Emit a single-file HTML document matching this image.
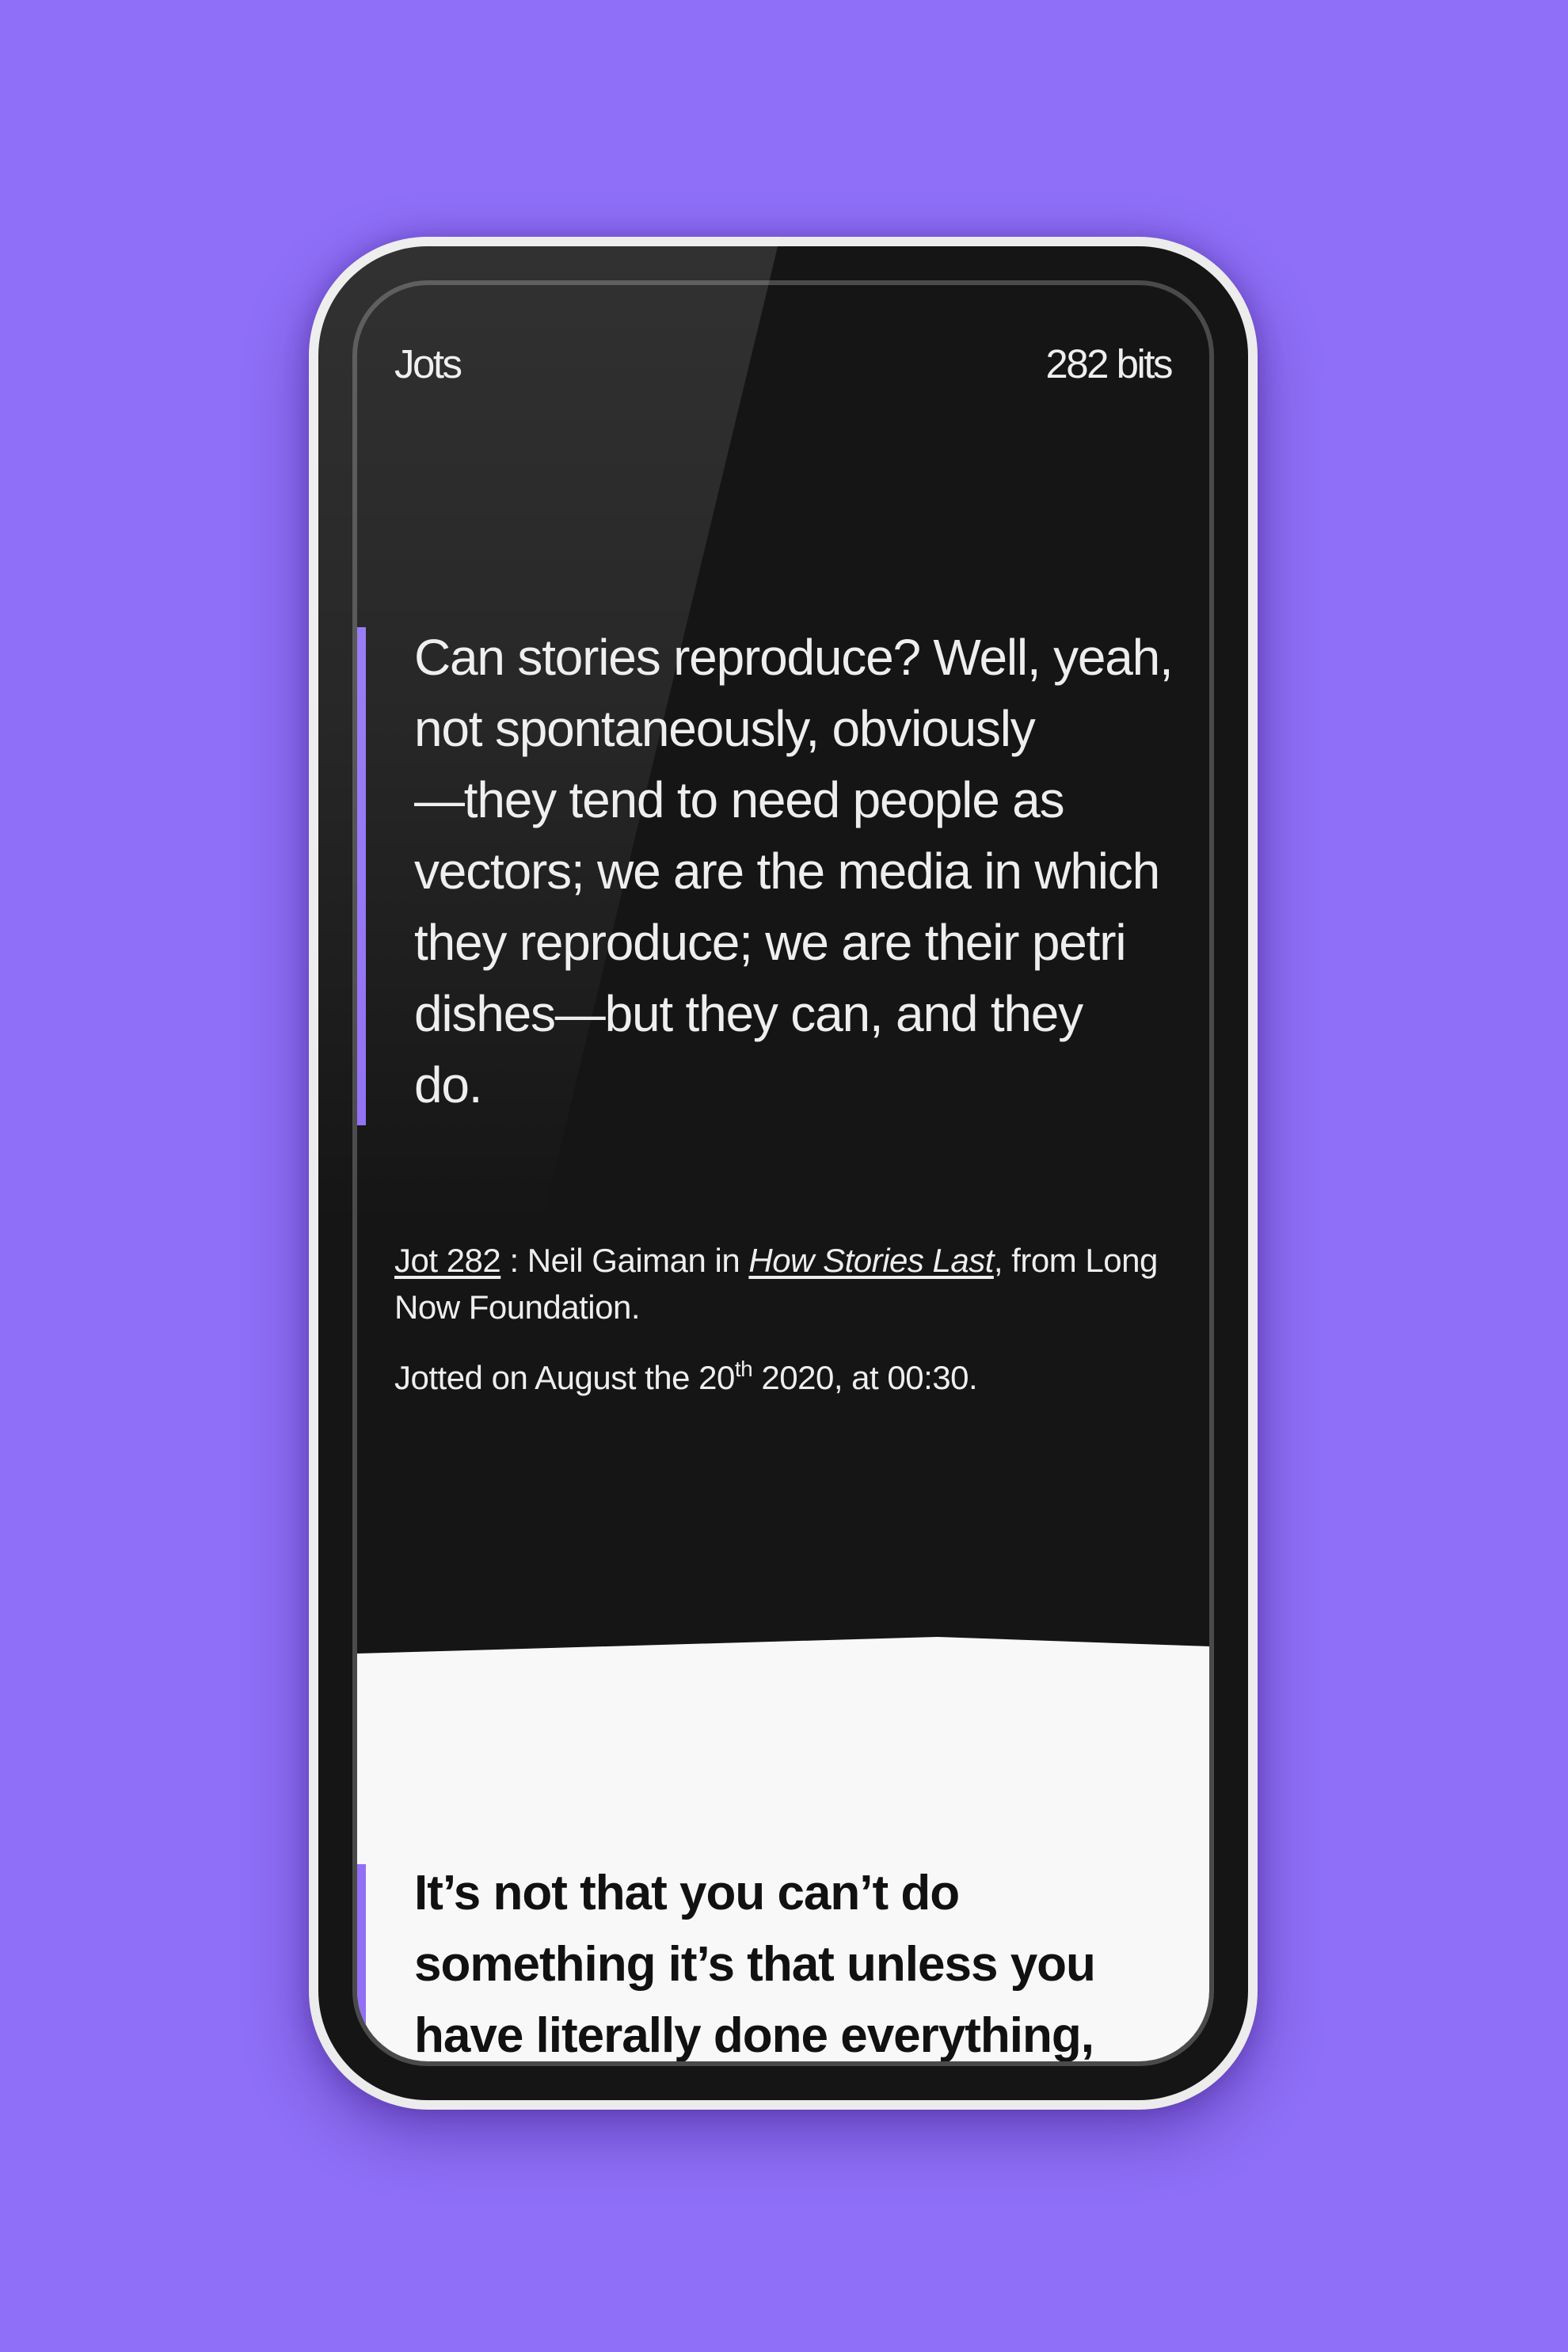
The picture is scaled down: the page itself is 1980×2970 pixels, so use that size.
<!DOCTYPE html>
<html><head><meta charset="utf-8"><style>
*{margin:0;padding:0;box-sizing:border-box}
html,body{width:1980px;height:2970px;overflow:hidden;background:#8f6ff7;font-family:"Liberation Sans",sans-serif}
.phone{position:absolute;left:390px;top:299px;width:1198px;height:2365px;border-radius:150px;background:#ececec;box-shadow:0 30px 80px rgba(50,20,120,.45),0 0 30px rgba(50,20,120,.3)}
.bezel{position:absolute;left:12px;top:12px;right:12px;bottom:12px;border-radius:138px;background:#151515;overflow:hidden}
.screen{position:absolute;left:445px;top:354px;width:1088px;height:2255px;border:6px solid #4a4a4a;border-radius:95px;overflow:hidden;background:#151515}
.glare{position:absolute;left:390px;top:299px;width:1198px;height:2365px;border-radius:150px;clip-path:polygon(0 0,595px 0,315px 1160px,0 2400px);background:linear-gradient(180deg,rgba(255,255,255,.12) 0,rgba(255,255,255,.08) 600px,rgba(255,255,255,.0) 1250px);pointer-events:none}
.t{position:absolute;color:#eee;white-space:nowrap}
.hdr{font-size:51px;letter-spacing:-2.5px;top:75px;line-height:50px}
.bar{position:absolute;left:0;width:11px;background:#9170f5}
.q{position:absolute;left:72px;font-size:64px;letter-spacing:-1.2px;line-height:90px;white-space:nowrap}
.meta{position:absolute;left:47px;font-size:42px;letter-spacing:-0.5px;line-height:59px;color:#eee;white-space:nowrap}
.meta u{text-underline-offset:5px}
.white{position:absolute;left:0;top:0;width:1076px;height:2243px;background:#f8f8f8;clip-path:polygon(0 1728px,733px 1707px,1076px 1719px,1076px 2243px,0 2243px)}
</style></head><body>
<div class="phone"><div class="bezel"></div></div>
<div class="screen">
  <div class="t hdr" style="left:47px">Jots</div>
  <div class="t hdr" style="right:48px">282 bits</div>
  <div class="bar" style="top:432px;height:629px"></div>
  <div class="q" style="top:425px;color:#eee">Can stories reproduce? Well, yeah,<br>not spontaneously, obviously<br>—they tend to need people as<br>vectors; we are the media in which<br>they reproduce; we are their petri<br>dishes—but they can, and they<br>do.</div>
  <div class="meta" style="top:1202px"><u>Jot 282</u> : Neil Gaiman in <u><i>How Stories Last</i></u>, from Long<br>Now Foundation.</div>
  <div class="meta" style="top:1350px">Jotted on August the 20<sup style="font-size:28px;vertical-align:16px;line-height:0">th</sup> 2020, at 00:30.</div>
  <div class="white"></div>
  <div class="bar" style="top:1994px;height:300px"></div>
  <div class="q" style="top:1986px;color:#111;font-weight:bold;font-size:62px;letter-spacing:-1px">It’s not that you can’t do<br>something it’s that unless you<br>have literally done everything,</div>
</div>
<div class="glare"></div>
</body></html>
